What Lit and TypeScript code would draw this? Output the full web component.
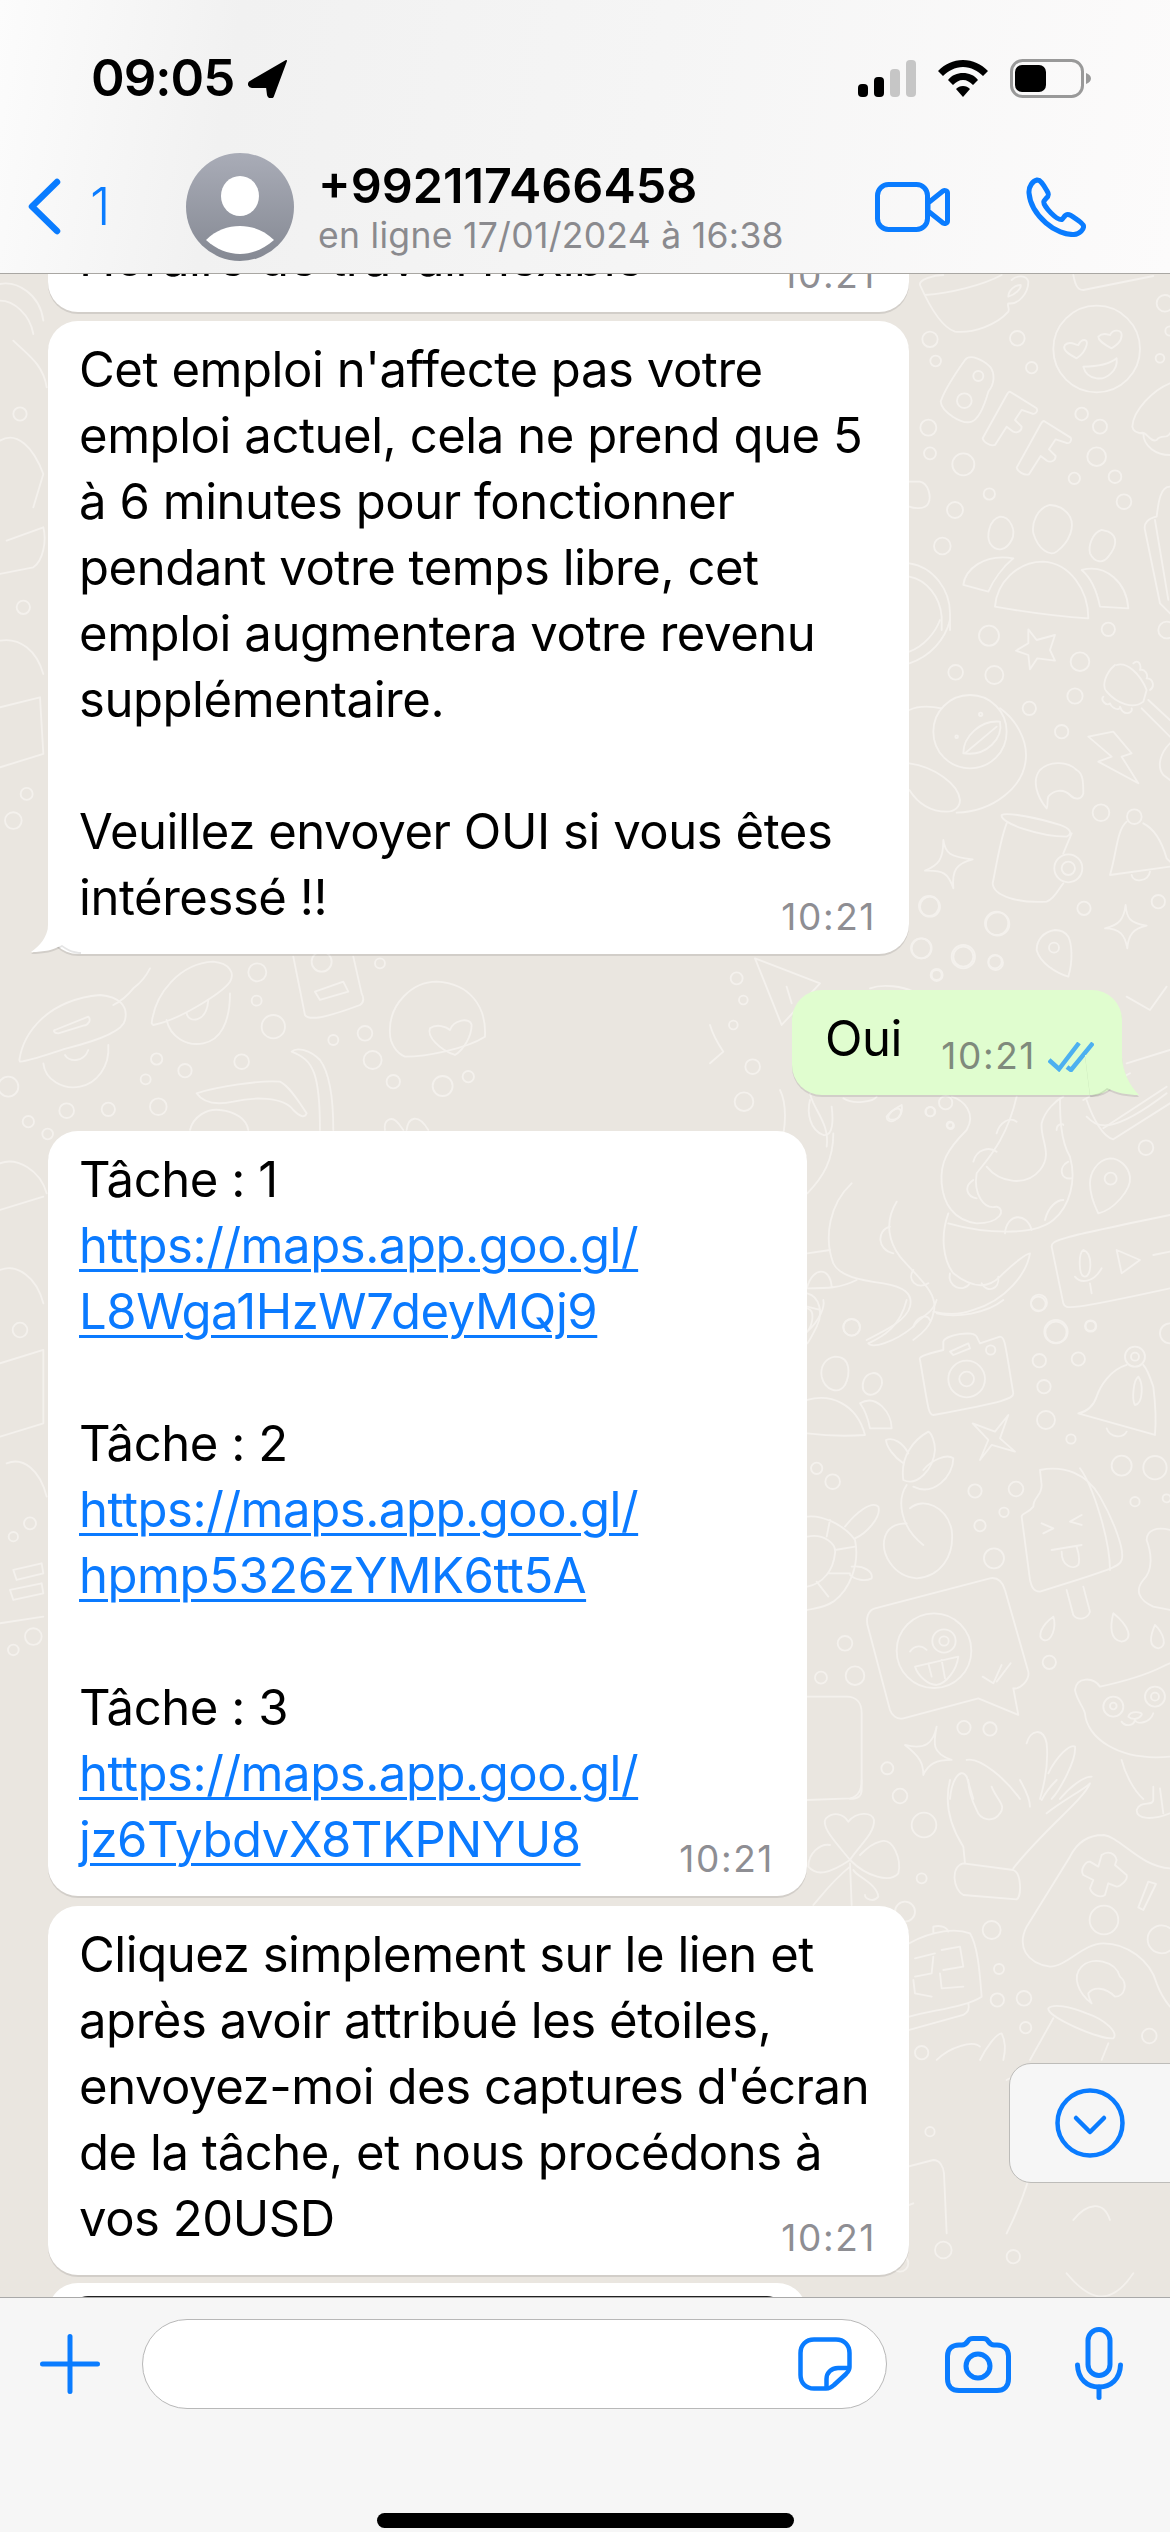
import { LitElement, html, css, svg } from "lit";
import { customElement } from "lit/decorators.js";

type Frame = { x: number; y: number; paths: string[]; circles: number[][] };

// Wallpaper doodles, traced in 3x crop coordinates and placed per region.
const FRAMES: Frame[] = [
  { x: 900, y: 270, paths: [
    "M60 45 C55 30 100 15 130 15 M60 45 C80 90 120 170 165 185 C220 190 290 165 325 125 C330 115 320 105 325 100 C355 105 385 70 385 35 C380 15 350 15 335 30 M75 75 C150 70 250 45 305 15 M325 80 C345 75 365 55 362 45 C345 45 325 60 325 80",
    "M520 15 C525 40 530 60 550 60 L760 18",
    "M530 265 C510 255 485 240 495 225 C510 210 525 225 535 225 C545 205 565 205 560 225 C555 245 545 255 530 265 Z",
    "M635 235 C615 225 595 210 595 200 C610 185 625 195 630 195 C640 175 665 180 665 195 C665 215 650 225 635 235Z",
    "M550 290 C585 290 625 285 650 265 C655 300 620 330 590 325 C570 322 555 310 550 290Z",
    "M195 270 C170 305 135 355 122 395 C125 425 185 465 215 455 C240 445 255 400 265 365 C285 340 285 310 270 290 C250 270 210 250 195 270Z",
    "M330 365 L410 415 C415 425 405 435 395 430 L365 420 L345 450 L365 470 C365 485 350 490 340 485 L320 470 L285 525 C270 530 250 515 248 505 L320 375 C325 365 330 365 330 365Z",
    "M432 453 L512 503 C517 513 507 523 497 518 L467 508 L447 538 L467 558 C467 573 452 578 442 573 L422 558 L387 613 C372 618 352 603 350 593 L422 463 C427 453 432 453 432 453Z",
    "M810 340 C760 360 700 420 697 470 C700 490 720 490 730 490 C730 530 770 555 810 555 M720 490 C740 480 750 520 770 510 C785 490 800 510 810 490",
    "M300 740 C265 750 260 800 270 820 C290 850 320 840 335 810 C350 780 330 740 300 740Z",
    "M450 705 C410 715 395 760 400 790 C415 840 450 860 470 845 C510 815 525 770 510 740 C495 715 470 705 450 705Z",
    "M605 780 C575 790 565 830 570 850 C585 880 610 880 625 860 C650 830 655 800 625 785Z",
    "M285 1010 C290 940 350 875 430 875 C510 880 565 960 565 1045 C480 1040 370 1025 285 1010Z",
    "M190 945 C195 900 250 850 340 865 C310 890 280 930 265 965 Z",
    "M545 900 C620 880 680 940 685 1015 L600 1010 C590 960 575 925 545 900Z",
    "M28 635 L60 635 C85 640 95 680 85 700 C75 720 40 715 28 710",
    "M810 650 C780 650 775 700 770 740 C745 745 730 760 735 780 L780 1000 L810 1030 M765 750 L805 990",
    "M28 880 C100 890 150 960 150 1030 L150 1080 M28 920 C80 930 120 980 125 1040 L125 1080",
  ], circles: [[590,237,130],[235,318,15],[193,392,22],[90,208,23],[352,205,22],[107,273,16],[395,293,17],[85,473,24],[90,550,18],[190,583,33],[545,432,19],[600,470,21],[590,560,28],[523,625,17],[645,620,19],[672,695,22],[268,672,17],[165,720,24],[127,828,25],[795,100,25],[810,183,14],[780,265,13]] },
  { x: 900, y: 620, paths: [
    "M150 0 C135 60 90 110 28 130 M120 0 C105 40 70 80 28 95",
    "M385 28 L410 60 L465 45 L450 90 L465 122 L412 115 L390 148 L385 105 L348 92 L385 70Z",
    "M645 135 C615 160 605 200 620 215 C650 250 700 270 730 245 M650 135 C680 125 720 160 740 210 L730 245 M700 130 C715 115 725 135 720 150 C735 145 745 165 740 175 C760 175 765 200 750 210 M610 230 C600 240 620 260 630 250 C635 265 660 275 660 260 C670 290 700 280 695 265 M745 240 L810 300 M725 265 L810 350",
    "M190 400 C190 350 240 300 300 305 C310 355 260 410 190 400Z M195 400 L290 320",
    "M28 270 C60 255 100 260 125 265 M300 265 C350 300 380 360 378 410 C375 500 280 575 170 578 M28 430 C100 440 175 490 180 540 C180 560 165 575 140 575 C100 575 60 560 28 510",
    "M440 565 C410 530 395 480 420 450 C445 425 500 420 530 450 C550 460 550 490 550 520 C545 540 525 540 510 525 C490 505 460 510 445 530 C440 545 445 555 440 565Z",
    "M565 350 L640 335 L695 400 L665 410 L715 490 L595 425 L635 410Z",
    "M305 585 C300 610 420 650 500 650 C520 640 510 625 480 615 C420 595 320 575 305 585Z M320 610 C300 660 285 760 278 790 C280 830 360 850 440 845 C465 835 480 800 490 790 M515 640 L490 700",
    "M680 605 C650 630 650 700 630 765 L810 740 M730 610 C770 630 790 680 800 715 L810 725 M695 765 C700 790 745 785 750 755",
    "M130 660 C135 700 150 710 218 718 C170 730 155 750 160 805 C145 760 130 750 75 752 C115 735 130 720 130 660Z",
    "M677 855 C680 895 690 910 740 917 C700 925 685 945 682 985 C675 945 660 925 615 925 C660 915 672 895 677 855Z",
    "M465 930 C430 935 410 960 410 990 C420 1030 470 1060 505 1070 C520 1020 515 970 505 950 C495 935 480 930 465 930Z",
    "M810 370 C780 400 770 440 790 465 L810 480",
  ], circles: [[210,335,110],[170,350,4],[242,283,5],[505,745,42],[505,745,20],[703,590,22],[462,983,15],[267,47,30],[167,157,22],[283,165,27],[625,28,20],[540,125,28],[525,228,23],[388,265,20],[485,335,20],[800,30,25],[603,578,25],[87,858,30],[293,912,35],[63,985,30],[190,1010,35],[287,1028,22],[552,865,20],[775,845,20],[110,1065,18]] },
  { x: 0, y: 955, paths: [
    "M58 315 C70 235 140 135 300 120 C360 125 385 155 375 195 C370 225 300 255 200 280 C150 295 100 315 60 320Z",
    "M165 225 L265 185 C275 195 265 210 250 212 L175 235 C160 235 160 225 165 225Z",
    "M130 325 C135 375 190 405 240 395 C290 385 330 335 325 270 M195 300 C205 320 250 325 265 285",
    "M455 205 C465 115 540 25 640 20 C690 25 705 55 690 80 C670 110 540 195 460 210Z",
    "M500 195 C510 245 560 275 610 265 C660 255 690 205 690 115 M560 175 C565 205 620 205 625 135",
    "M880 5 L915 180 C925 195 960 195 1080 150 C1095 140 1090 125 1085 115 L1060 5 M945 110 L1030 80 L1045 110 L960 135Z",
    "M1170 235 C1165 145 1240 80 1310 80 C1410 85 1460 155 1455 245 C1400 280 1280 305 1215 305 C1190 295 1170 265 1170 235Z",
    "M1365 300 C1320 285 1280 245 1290 220 C1310 205 1340 215 1350 225 C1360 195 1410 185 1415 210 C1415 245 1390 285 1365 300Z",
    "M875 290 C940 315 960 355 960 525 M875 290 C890 275 930 285 960 315 C990 355 1000 435 1000 525",
    "M590 415 C650 395 780 375 840 380 C870 395 900 445 920 475 C915 490 900 485 880 465 C850 425 760 425 700 440 C650 450 610 445 590 415Z",
    "M570 525 C580 485 620 460 660 465 C710 470 740 495 745 525",
    "M1155 525 C1150 495 1175 480 1195 505 L1210 525 M1220 525 C1225 485 1255 475 1285 525",
    "M450 40 C440 60 420 85 400 100 C380 125 360 140 340 150",
  ], circles: [[772,52,27],[770,137,15],[820,215,35],[1000,255,15],[1095,235,22],[1118,315,27],[1180,380,20],[1328,393,30],[1405,365,17],[725,320,22],[555,347,20],[470,312,17],[437,373,15],[25,395,30],[475,455,25],[325,463,20],[200,467,22],[85,500,17],[143,537,16],[1140,25,15],[965,20,30]] },
  { x: 700, y: 860, paths: [
    "M165 295 L360 370 L245 495 Z M260 380 L275 430",
    "M30 495 C40 530 60 560 70 575 L30 610",
    "M240 690 C260 730 260 800 240 860 M330 700 C340 750 390 790 380 860",
    "M560 770 C600 720 620 760 585 780 C570 790 560 780 560 770Z",
    "M1150 720 L1290 640 M1160 770 C1190 800 1230 830 1400 700 M1280 410 L1350 450 L1400 380 M1280 610 L1410 570",
    "M510 385 C550 370 610 380 640 395",
  ], circles: [[110,355,18],[130,420,13],[100,495,13],[158,620,22],[132,725,28],[692,755,14],[750,795,10],[710,345,15],[885,305,20],[790,290,30],[665,265,30],[690,140,30],[890,190,35]] },
  { x: 800, y: 1080, paths: [
    "M455 50 C490 60 530 100 500 150 C440 210 420 250 425 310 C430 370 460 420 530 430 C600 430 620 390 590 380 C550 390 520 340 530 280 C560 240 620 180 650 50",
    "M560 260 C600 310 680 320 720 270 C760 220 720 180 725 130 C735 90 770 60 790 50",
    "M780 55 C780 100 780 180 810 230 C830 300 810 380 760 420 C700 470 550 460 445 430",
    "M520 245 C530 205 570 200 590 215 M590 160 C600 125 630 110 650 125 M770 150 C770 130 790 130 790 135 M805 245 C775 260 780 300 815 295 M520 300 C490 320 500 350 530 355 M615 460 C620 400 680 395 695 450 M735 420 C745 380 770 360 790 360",
    "M445 400 C420 470 430 540 460 580 C510 620 560 630 600 590 C640 550 680 520 690 520 C680 580 620 660 520 690 C480 705 440 705 400 695",
    "M450 580 C440 620 490 640 510 610 M545 610 C560 640 600 630 595 590",
    "M155 310 C90 370 70 470 100 550 C120 590 180 600 250 610 C310 620 340 640 330 680 C320 720 260 750 200 780",
    "M290 365 C250 430 270 490 300 530 C350 590 420 640 400 700 C390 750 350 770 340 780",
    "M270 440 C230 450 230 510 280 520 M340 570 C320 600 350 630 385 610 M340 740 C350 710 380 700 390 720",
    "M22 520 L90 510 M22 620 C40 560 90 560 95 620 M22 625 C80 625 120 625 170 600 M22 640 C60 650 70 700 50 740 C40 760 30 780 22 790 M22 680 L60 690",
    "M30 60 C20 100 30 150 70 165 C100 170 100 120 95 80 M100 160 C100 240 70 290 22 340",
    "M860 60 C880 120 910 170 940 178 L1110 70 M910 145 L1100 20",
    "M930 235 C890 240 870 280 870 310 C870 340 885 380 895 400 C940 390 995 330 990 290 C985 260 960 235 930 235Z",
    "M755 500 C755 480 770 475 1110 405 M755 500 L790 670 C795 690 810 690 1110 625",
    "M850 510 C835 520 835 590 855 590 C875 590 880 520 850 510Z M825 590 C840 610 880 610 905 565 M870 610 L875 640 M950 510 L1020 540 L965 580Z M1060 525 L1110 515",
    "M305 75 C275 90 255 110 270 118 C295 125 310 100 305 75Z",
    "M130 55 C160 75 220 65 230 50",
  ], circles: [[390,95,14],[452,137,10],[437,68,20],[932,296,18],[1038,203,22],[717,668,24],[872,738,15],[768,755,35],[155,742,25]] },
  { x: 800, y: 1300, paths: [
    "M360 180 C355 170 370 165 430 150 L430 125 C435 105 520 90 530 110 L540 130 L600 110 C615 110 615 130 640 280 C640 295 620 305 400 345 C385 345 385 325 360 180Z",
    "M450 155 L505 130 L510 145 L460 165Z",
    "M105 170 C75 175 60 200 65 230 C75 270 115 285 135 255 C150 225 155 170 105 170Z",
    "M215 220 C190 225 185 255 190 270 C205 295 235 285 245 255 C250 235 235 215 215 220Z",
    "M22 300 C90 280 170 310 195 405 C130 410 60 405 22 400 M180 310 C230 280 275 340 275 385 L210 385 C205 360 195 330 180 310Z",
    "M205 130 C250 110 300 80 320 0 M205 130 C215 145 280 130 340 80 C360 50 400 40 410 0 M410 40 C470 55 560 40 610 0",
    "M22 95 C60 60 75 20 70 0 M22 25 C45 30 40 70 22 95",
    "M980 195 C930 210 900 260 890 290 C880 320 860 335 835 340 L1065 405 C1070 350 1065 300 1060 260 C1050 230 1040 205 1030 195 M920 385 C930 415 970 415 980 395 M1015 230 C1000 240 995 300 1005 315 C1030 310 1030 250 1015 230Z",
    "M625 345 L600 415 L645 455 L575 435 L540 480 L565 420 L518 370 L585 395Z",
    "M385 395 C340 420 300 470 310 540 C350 560 400 510 405 450 C405 425 395 400 385 395Z M310 490 C280 470 260 440 258 420 C280 410 310 430 325 460 M370 510 C395 480 440 460 460 475 C460 530 400 590 340 560 M320 555 C290 600 300 680 370 735",
    "M330 625 C370 590 440 620 455 690 C465 770 420 830 350 835 C280 830 240 760 255 710 C265 680 290 670 320 670",
    "M22 650 C60 645 130 670 165 720 C180 790 150 870 100 905 C70 925 40 925 22 930 M22 710 C70 700 110 730 105 760 C100 810 70 850 22 860 M90 660 L80 710 M105 750 L165 740 M85 820 L150 820 M50 845 L85 890",
    "M135 680 C165 640 215 600 235 620 C245 650 200 700 165 715 M155 800 C190 795 220 815 215 835 C195 845 165 840 150 825",
    "M720 510 C790 495 860 520 900 590 C940 660 975 750 965 780 C960 800 930 810 720 875 C700 875 695 860 690 840 L665 650 C665 640 685 640 700 620 C700 590 725 590 725 555Z M840 505 C880 560 930 720 930 810",
    "M725 670 L760 685 L730 700 M845 645 L810 665 L845 675 M755 750 L845 735 M785 755 C785 800 820 810 835 795 C840 780 835 755 830 740 M800 870 L820 945 C835 965 865 955 870 935 L850 860",
    "M225 925 L570 835 C595 830 610 850 615 870 L685 1115 C690 1140 660 1170 640 1165 L655 1245 L535 1195 L310 1255 C290 1260 275 1245 270 1230 L205 985 C195 955 205 930 225 925Z",
    "M330 1055 C345 1035 365 1035 380 1050 M345 1100 L475 1070 C470 1110 440 1150 410 1155 C385 1155 355 1130 345 1100Z M385 1090 L395 1130 M425 1080 L435 1135 M548 1130 L580 1150 L605 1095 M590 1145 L632 1090",
    "M22 1190 L140 1190 C170 1190 185 1210 185 1240 L185 1470 C185 1490 170 1497 150 1497",
    "M410 1280 C400 1330 395 1360 455 1380 C410 1380 385 1390 370 1425 C370 1390 360 1370 315 1335 C375 1350 400 1330 410 1280Z",
    "M760 950 C725 975 710 1010 730 1020 C755 1030 770 980 760 950Z M940 940 C930 980 930 1020 965 1025 C1000 1020 990 980 940 940Z M1065 975 C1050 1010 1045 1040 1075 1045 C1105 1040 1090 1000 1065 975Z",
    "M1110 1090 C1080 1100 1060 1125 900 1160 C880 1130 830 1130 825 1170 C830 1200 850 1220 855 1240 C860 1310 950 1385 1110 1370",
    "M985 1250 C990 1230 1030 1235 1025 1245 C1015 1260 995 1260 985 1250Z M965 1265 C975 1280 1000 1280 1005 1260 C1010 1275 1050 1270 1060 1240",
    "M450 1497 C455 1440 480 1400 500 1430 L520 1497 M500 1380 C540 1370 620 1440 660 1497 M680 1330 C690 1290 730 1280 740 1330 C745 1380 740 1430 720 1497 M745 1420 C770 1370 810 1330 825 1340 C830 1380 780 1470 755 1497 M780 1497 C810 1460 850 1430 875 1430",
    "M1110 690 C1070 680 1040 690 1040 720 C1055 760 1060 810 1030 840 C1005 870 1015 900 1060 920 L1110 930",
    "M965 1380 C975 1420 1000 1470 1030 1497",
  ], circles: [[500,237,55],[500,237,22],[572,150,14],[1005,170,30],[1005,170,12],[402,1052,112],[432,1023,35],[432,1023,14],[940,1220,30],[940,1218,10],[1065,1190,30],[1065,1190,12],[155,82,25],[715,12,22],[768,97,32],[872,78,17],[718,182,20],[835,177,20],[732,260,20],[738,360,27],[813,417,14],[965,497,30],[1065,503,35],[1005,605,14],[50,505,17],[98,545,22],[525,573,20],[648,567,22],[612,637,14],[540,677,17],[582,775,30],[1110,100,30],[135,1030,22],[63,1133,18],[165,1127,28],[748,1087,20],[492,1283,20],[570,1287,20],[262,1405,18],[1100,595,12]] },
  { x: 800, y: 1780, paths: [
    "M450 0 C435 60 445 130 490 200 L495 250 M575 20 C590 60 620 75 600 100 C580 130 540 120 530 90 C515 60 505 30 505 0 M690 80 C690 50 670 20 660 0 M725 60 C740 30 760 10 770 0 M740 100 C790 60 850 30 870 10 C850 60 730 150 640 265",
    "M490 250 L640 270 C665 280 665 350 650 358 L490 345 C460 330 450 260 490 250Z",
    "M150 240 C110 190 60 140 78 115 C100 95 130 100 145 125 C170 95 215 95 222 120 C225 160 175 200 150 240Z",
    "M150 240 C90 280 50 290 25 260 C25 220 60 190 90 195 M150 240 C200 290 270 310 295 280 C305 240 280 170 240 185 C215 190 195 210 180 225 M160 270 C170 290 230 310 235 350 C220 370 195 355 195 345 M150 250 L155 375 M150 260 C100 300 70 340 40 375",
    "M910 165 C860 165 830 190 810 230 L680 440 C650 500 680 550 750 560 C800 560 850 490 910 490 C980 490 1050 540 1070 610 C1085 650 1110 680 1110 680 M910 165 C960 170 1020 260 1110 265",
    "M905 225 C925 210 945 220 950 240 L945 255 L980 285 C985 300 960 320 950 320 L925 310 L915 345 C900 355 875 345 870 325 L880 300 L850 285 C840 270 855 245 870 245 L895 260Z",
    "M1045 305 L1068 312 L1030 390 L1015 382Z",
    "M875 670 C835 640 815 590 845 560 C875 530 945 540 960 590 C985 610 975 650 945 650 C915 620 880 620 865 640 C865 650 870 660 875 670Z",
    "M328 490 C400 450 470 445 510 460 C535 500 540 590 545 650 C500 680 400 690 328 710 M400 460 L400 440 C420 435 440 440 445 455 M505 670 C510 690 500 700 490 705 L328 750",
    "M345 535 L405 520 M400 530 L395 580 M345 590 L395 580 M340 600 L345 640 L395 650 M425 510 L480 500 L490 560 M430 570 L490 560 M420 580 L425 625 L490 620",
    "M745 685 C740 710 900 780 940 775 C955 760 920 720 860 700 C810 680 760 670 745 685Z M760 715 L690 840 M925 790 L905 840",
    "M1110 100 C1060 120 1010 120 1010 90 C1020 60 1060 80 1060 60 L1060 20 M1080 25 L1090 100",
    "M410 840 C450 800 520 780 540 800 M540 840 C560 800 590 760 605 760 C620 790 615 820 610 840",
    "M22 60 L150 55 C175 50 185 30 185 0",
  ], circles: [[300,48,22],[372,135,37],[365,295,15],[315,395,30],[575,450,27],[597,567,15],[592,660,20],[672,655,22],[677,743,17],[1048,768,22],[912,420,43],[1085,478,42],[365,818,20]] },
  { x: 800, y: 2060, paths: [
    "M100 60 C160 20 220 30 270 100 C310 180 280 260 200 330 C130 360 80 330 70 280 M270 60 C290 20 320 40 320 90",
    "M170 360 L400 300 C420 300 430 320 432 340 L440 520 M250 370 C260 420 300 450 340 430",
    "M620 60 L680 30 M650 240 L720 330 M820 480 C860 430 910 420 930 480",
    "M700 300 C680 400 640 480 620 520 M1000 150 L1060 210 L1110 180",
    "M800 640 C850 700 920 760 1000 640",
  ], circles: [[260,160,18],[390,215,14],[430,570,25],[300,610,25],[640,590,20]] },
  { x: 0, y: 274, paths: [
    "M0 30 C50 20 120 60 130 140 M0 80 C40 80 90 120 100 180 M40 200 C80 240 130 270 140 340",
    "M0 500 C50 470 100 520 130 600 L100 700 M20 800 L130 760 C140 800 130 860 100 880 L0 900",
    "M0 1100 C60 1090 110 1130 130 1200 M0 1300 L120 1270 L130 1440 L0 1480",
  ], circles: [[60,420,20],[70,1000,20],[80,1560,18],[40,1640,25]] },
  { x: 0, y: 1130, paths: [
    "M0 100 C50 80 120 120 140 190 M0 240 L130 200 M0 420 C50 400 110 440 130 520",
    "M0 700 L130 660 L130 880 L0 920 M20 1000 C70 980 120 1020 140 1100",
    "M40 1320 L125 1300 L130 1330 L50 1350Z M30 1380 L125 1360 L130 1390 L40 1410Z M0 1480 L130 1460",
  ], circles: [[60,600,22],[90,1180,18],[40,1220,14],[100,1520,25],[40,1560,16]] },
];

const LEFT_A = [
  "Cet emploi n'affecte pas votre",
  "emploi actuel, cela ne prend que 5",
  "à 6 minutes pour fonctionner",
  "pendant votre temps libre, cet",
  "emploi augmentera votre revenu",
  "supplémentaire.",
  "",
  "Veuillez envoyer OUI si vous êtes",
  "intéressé !!",
];
const LEFT_C = [
  "Cliquez simplement sur le lien et",
  "après avoir attribué les étoiles,",
  "envoyez-moi des captures d'écran",
  "de la tâche, et nous procédons à",
  "vos 20USD",
];
const TASKS = [
  ["Tâche : 1", "L8Wga1HzW7deyMQj9"],
  ["Tâche : 2", "hpmp5326zYMK6tt5A"],
  ["Tâche : 3", "jz6TybdvX8TKPNYU8"],
];

@customElement("app-root")
export class AppRoot extends LitElement {
  static styles = css`
    :host {
      display: flex;
      flex-direction: column;
      width: 1170px;
      height: 2532px;
      overflow: hidden;
      font-family: Inter, "Liberation Sans", sans-serif;
      color: #000;
    }
    svg { display: block; flex: none; }

    .header {
      flex: none;
      height: 274px;
      box-sizing: border-box;
      border-bottom: 1px solid #a9a7a3;
      background: linear-gradient(100deg, #fcfcfc 0, #f1f1f1 20%, #f5f5f5 55%, #fcfbfb 100%);
    }
    .status {
      display: flex;
      align-items: center;
      justify-content: space-between;
      height: 46px;
      padding: 55px 79px 0 91px;
    }
    .clock { display: flex; align-items: center; gap: 14px; }
    .clock-text { font-size: 51px; font-weight: 600; letter-spacing: -1px; line-height: 46px; }
    .indicators { display: flex; align-items: center; gap: 22px; }
    .nav {
      display: flex;
      align-items: center;
      height: 107px;
      margin-top: 52px;
      padding: 0 84px 0 28px;
    }
    .count { font-size: 52px; color: #0a7cff; margin-left: 29px; width: 96px; font-weight: 300; }
    .avatar { margin-right: 24px; }
    .who { display: flex; flex-direction: column; margin-top: 3px; }
    .name { font-size: 48.5px; font-weight: 600; line-height: 56px; letter-spacing: 0; }
    .sub { font-size: 35.5px; line-height: 44px; color: #8a8a8e; letter-spacing: 0.3px; }
    .calls { display: flex; align-items: center; gap: 76px; margin-left: auto; }

    .chat {
      flex: 1;
      position: relative;
      overflow: hidden;
      background: #eae6e0;
    }
    .doodles { position: absolute; inset: 0; }
    .doodles path, .doodles circle { fill: none; stroke: #f4f1ed; stroke-width: 5.5; stroke-linejoin: round; stroke-linecap: round; }
    .flow {
      position: relative;
      display: flex;
      flex-direction: column;
      align-items: flex-start;
      padding-left: 48px;
    }
    .bubble {
      position: relative;
      flex: none;
      box-sizing: border-box;
      padding: 16px 31px 23px;
      background: #fff;
      border-radius: 30px;
      box-shadow: 0 2px 0 rgba(0, 0, 0, 0.1);
      font-size: 49px;
      line-height: 66px;
      letter-spacing: -0.44px;
      white-space: nowrap;
    }
    .wide { width: 861px; }
    .mid { width: 759px; }
    .line { height: 66px; }
    .link { display: block; height: 66px; color: #0a7aff; text-decoration: underline; text-decoration-thickness: 3px; text-underline-offset: 6px; }
    .partial { margin-top: -130px; padding-bottom: 20px; }
    .second { margin-top: 9px; }
    .sent {
      align-self: flex-end;
      width: 330px;
      margin: 36px 48px 36px 0;
      background: #e0fdcf;
      padding-left: 33px;
    }
    .third { margin-top: 10px; }
    .last { margin-top: 8px; height: 60px; padding: 13px 22px 0; }
    .thumb { height: 40px; border-top: 2px solid #222; border-radius: 18px 18px 0 0; background: #fff; }
    .time {
      position: absolute;
      right: 33px;
      bottom: 22px;
      font-size: 37px;
      line-height: 30px;
      letter-spacing: 1.6px;
      color: #8e8e93;
    }
    .sent .time { right: 86px; bottom: 24px; color: #7f8a7c; }
    .ticks { position: absolute; left: 256px; top: 52px; }
    .tail-left { position: absolute; left: -17px; bottom: -2px; }
    .tail-right { position: absolute; right: -17px; bottom: -2px; }
    .down {
      position: absolute;
      right: -1px;
      top: 1789px;
      width: 162px;
      height: 120px;
      box-sizing: border-box;
      display: flex;
      align-items: center;
      justify-content: center;
      padding-right: 1px;
      background: #f6f6f6;
      border: 1px solid #bdbcb9;
      border-radius: 22px 0 0 22px;
    }

    .footer {
      flex: none;
      height: 235px;
      box-sizing: border-box;
      position: relative;
      background: #f6f6f6;
      border-top: 1px solid #a9a9a9;
    }
    .bar { display: flex; align-items: flex-start; height: 134px; padding: 21px 0 0 40px; }
    .plus { margin-top: 15px; }
    .input {
      box-sizing: border-box;
      width: 745px;
      height: 90px;
      margin-left: 42px;
      display: flex;
      align-items: center;
      justify-content: flex-end;
      padding-right: 34px;
      background: #fff;
      border: 1px solid #b8b8b8;
      border-radius: 45px;
    }
    .camera { margin: 17px 0 0 58px; }
    .mic { margin: 8px 0 0 64px; }
    .home { width: 417px; height: 15px; margin: 60px auto 0; background: #000; border-radius: 8px; }
  `;

  private doodles() {
    return svg`<svg class="doodles" width="1170" height="2023" viewBox="0 274 1170 2023">
      ${FRAMES.map(
        (f) => svg`<g transform="translate(${f.x} ${f.y}) scale(0.3333)">
          ${f.paths.map((d) => svg`<path d=${d}></path>`)}
          ${f.circles.map((c) => svg`<circle cx=${c[0]} cy=${c[1]} r=${c[2]}></circle>`)}
        </g>`
      )}
    </svg>`;
  }

  private statusBar() {
    return html`<div class="status">
      <div class="clock">
        <span class="clock-text">09:05</span>
        <svg width="40" height="40" viewBox="0 0 40 40"><path d="M38 3 L2 24 C0 26 1 29 4 29 L19 29 L20 37 C21 40 24 40 25 38 Z" fill="#000" stroke="#000" stroke-width="2" stroke-linejoin="round"></path></svg>
      </div>
      <div class="indicators">
        <svg width="58" height="37" viewBox="0 0 58 37">
          <rect x="0" y="24" width="10" height="13" rx="4" fill="#000"></rect>
          <rect x="16" y="17" width="10" height="20" rx="4" fill="#000"></rect>
          <rect x="32" y="9" width="10" height="28" rx="4" fill="#c6c6c6"></rect>
          <rect x="48" y="0" width="10" height="37" rx="4" fill="#c6c6c6"></rect>
        </svg>
        <svg width="50" height="37" viewBox="0 0 50 37">
          <path d="M25 0 C15 0 7 4 0 11 L5 16 C10 11 17 7 25 7 C33 7 40 11 45 16 L50 11 C43 4 35 0 25 0Z" fill="#000"></path>
          <path d="M25 13 C19 13 14 15 10 20 L15 25 C18 22 21 20 25 20 C29 20 32 22 35 25 L40 20 C36 15 31 13 25 13Z" fill="#000"></path>
          <path d="M25 26 C22 26 20 27 18 29 L25 37 L32 29 C30 27 28 26 25 26Z" fill="#000"></path>
        </svg>
        <svg width="81" height="39" viewBox="0 0 81 39">
          <rect x="1.5" y="1.5" width="71" height="36" rx="11" fill="none" stroke="#999" stroke-width="3"></rect>
          <rect x="5" y="6" width="31" height="27" rx="7" fill="#000"></rect>
          <path d="M76 14 C79 15 81 17 81 19.5 C81 22 79 24 76 25 Z" fill="#999"></path>
        </svg>
      </div>
    </div>`;
  }

  private nav() {
    return html`<div class="nav">
      <svg width="33" height="57" viewBox="0 0 33 57"><path d="M29 4 L4 28.5 L29 53" fill="none" stroke="#0a7cff" stroke-width="6.5" stroke-linecap="round" stroke-linejoin="round"></path></svg>
      <span class="count">1</span>
      <svg class="avatar" width="108" height="108" viewBox="0 0 108 108">
        <defs>
          <linearGradient id="av" x1="0" y1="0" x2="0" y2="1"><stop offset="0" stop-color="#a9acb7"></stop><stop offset="1" stop-color="#858993"></stop></linearGradient>
        </defs>
        <circle cx="54" cy="54" r="54" fill="url(#av)"></circle>
        <ellipse cx="54" cy="43" rx="19" ry="20" fill="#fff"></ellipse>
        <path d="M20 87 C30 77 42 73 54 73 C66 73 78 77 88 87 C78 96 66 101 54 101 C42 101 30 96 20 87Z" fill="#fff"></path>
      </svg>
      <div class="who">
        <div class="name">+992117466458</div>
        <div class="sub">en ligne 17/01/2024 à 16:38</div>
      </div>
      <div class="calls">
        <svg width="75" height="50" viewBox="0 0 75 50" fill="none" stroke="#0a7cff" stroke-width="5" stroke-linejoin="round">
          <rect x="2.5" y="2.5" width="50" height="45" rx="11"></rect>
          <path d="M53 21 L68 9 C70 8 72.500 9 72.500 11 L72.500 39 C72.500 41 70 42 68 41 L53 29 Z"></path>
        </svg>
        <svg width="60" height="60" viewBox="0 0 60 60" fill="none" stroke="#0a7cff" stroke-width="5" stroke-linejoin="round">
          <path d="M11 3 C7 4 2.500 9 3 16 C4 28 12 39 20 46 C29 54 40 58 48 57.500 C54 57 58 52 57.500 49 C57 46 50 42 45 38.500 C42 37 40 37 38 40 L36 42.500 C34 43 30 41 25 36 C20 31 17 26 18 24 L20 21.500 C23 19 23 17 21 14 C18 9 15 2.500 11 3Z"></path>
        </svg>
      </div>
    </div>`;
  }

  private messages() {
    return html`<div class="flow">
      <div class="bubble wide partial">
        <div class="line"></div>
        <div class="line">Horaire de travail flexible</div>
        <span class="time">10:21</span>
      </div>

      <div class="bubble wide second">
        ${LEFT_A.map((l) => html`<div class="line">${l}</div>`)}
        <span class="time">10:21</span>
        <svg class="tail-left" width="50" height="38" viewBox="0 0 50 38">
          <path d="M17 0 L17 7 C17 18 9 28 0 34 C14 34 22 32 31 27 C38 32 44 34 50 34 L50 0 Z" fill="rgba(0,0,0,.1)" transform="translate(0 2)"></path>
          <path d="M17 0 L17 7 C17 18 9 28 0 34 C14 34 22 32 31 27 C38 32 44 34 50 34 L50 0 Z" fill="#fff"></path>
        </svg>
      </div>

      <div class="bubble sent">
        <div class="line">Oui</div>
        <span class="time">10:21</span>
        <svg class="ticks" width="46" height="30" viewBox="0 0 46 30" fill="none" stroke="#4db0f0" stroke-width="4.500">
          <path d="M1 18 L11 27 L31 1"></path>
          <path d="M19 25 L23 28 L45 1"></path>
        </svg>
        <svg class="tail-right" width="54" height="42" viewBox="0 0 54 42">
          <path d="M37 0 C37 15 44 30 54 40 C42 40 32 38 22 33 C16 38 10 40 5 40 L0 0 Z" fill="rgba(0,0,0,.1)" transform="translate(0 2)"></path>
          <path d="M37 0 C37 15 44 30 54 40 C42 40 32 38 22 33 C16 38 10 40 5 40 L0 0 Z" fill="#e0fdcf"></path>
        </svg>
      </div>

      <div class="bubble mid">
        ${TASKS.map(
          (t, i) => html`
            <div class="line">${t[0]}</div>
            <a class="link">https://maps.app.goo.gl/</a>
            <a class="link">${t[1]}</a>
            ${i < TASKS.length - 1 ? html`<div class="line"></div>` : ""}
          `
        )}
        <span class="time">10:21</span>
      </div>

      <div class="bubble wide third">
        ${LEFT_C.map((l) => html`<div class="line">${l}</div>`)}
        <span class="time">10:21</span>
      </div>

      <div class="bubble mid last"><div class="thumb"></div></div>
    </div>`;
  }

  private footer() {
    return html`<div class="footer">
      <div class="bar">
        <svg class="plus" width="60" height="60" viewBox="0 0 60 60"><path d="M30 2.500 V57.500 M2.500 30 H57.500" stroke="#0a7cff" stroke-width="5" stroke-linecap="round"></path></svg>
        <div class="input">
          <svg width="54" height="54" viewBox="0 0 54 54" fill="none" stroke="#0a7cff" stroke-width="4.500" stroke-linejoin="round">
            <path d="M16 2.500 H38 C46 2.500 51.500 8 51.500 16 V30 C51.500 33 50 35 48 37 L36 48 C34 50 31 51.500 28 51.500 H16 C8 51.500 2.500 46 2.500 38 V16 C2.500 8 8 2.500 16 2.500Z"></path>
            <path d="M51 31 H40 C33 31 28.500 36 28.500 42 V51"></path>
          </svg>
        </div>
        <svg class="camera" width="66" height="57" viewBox="0 0 66 57" fill="none" stroke="#0a7cff" stroke-width="5" stroke-linejoin="round">
          <path d="M14 9 H17 C20 9 21 8 23 5 C24 3 26 2.500 28 2.500 H38 C40 2.500 42 3 43 5 C45 8 46 9 49 9 H52 C59 9 63.500 13 63.500 20 V43 C63.500 50 59 54.500 52 54.500 H14 C7 54.500 2.500 50 2.500 43 V20 C2.500 13 7 9 14 9Z"></path>
          <circle cx="33" cy="30" r="12"></circle>
        </svg>
        <svg class="mic" width="48" height="73" viewBox="0 0 48 73" fill="none" stroke="#0a7cff" stroke-width="5" stroke-linecap="round">
          <rect x="13" y="2.500" width="22" height="46" rx="11"></rect>
          <path d="M2.500 38 C3 52 12 60 24 60 C36 60 45 52 45.500 38"></path>
          <path d="M24 60 V70.500"></path>
        </svg>
      </div>
      <div class="home"></div>
    </div>`;
  }

  render() {
    return html`
      <div class="header">${this.statusBar()}${this.nav()}</div>
      <div class="chat">
        ${this.doodles()}
        ${this.messages()}
        <div class="down">
          <svg width="70" height="70" viewBox="0 0 70 70" fill="none" stroke="#0a7cff" stroke-width="4.500" stroke-linecap="round" stroke-linejoin="round">
            <circle cx="35" cy="35" r="32.500"></circle>
            <path d="M21 30 L35 44 L49 30"></path>
          </svg>
        </div>
      </div>
      ${this.footer()}
    `;
  }
}
